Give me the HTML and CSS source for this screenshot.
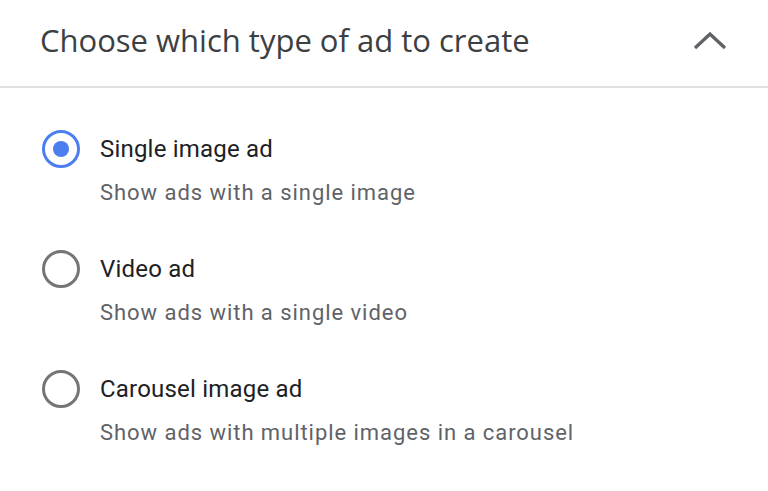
FILE: index.html
```html
<!DOCTYPE html>
<html>
<head>
<meta charset="utf-8">
<link rel="stylesheet" href="styles.css">
</head>
<body>
<div class="panel">
  <div class="header">
    <h1 class="title">Choose which type of ad to create</h1>
    <svg class="chevron" width="36" height="36" viewBox="0 0 36 36"><path d="M3 25 L18 11 L33 25" fill="none" stroke="#5f6368" stroke-width="3.4"/></svg>
  </div>
  <div class="options">
    <div class="option">
      <span class="radio checked"></span>
      <div class="texts">
        <div class="label">Single image ad</div>
        <div class="desc">Show ads with a single image</div>
      </div>
    </div>
    <div class="option">
      <span class="radio"></span>
      <div class="texts">
        <div class="label">Video ad</div>
        <div class="desc">Show ads with a single video</div>
      </div>
    </div>
    <div class="option">
      <span class="radio"></span>
      <div class="texts">
        <div class="label">Carousel image ad</div>
        <div class="desc">Show ads with multiple images in a carousel</div>
      </div>
    </div>
  </div>
</div>
</body>
</html>
```
FILE: styles.css
```css
html, body { margin: 0; padding: 0; background: #fff; }
body { font-family: Roboto, "Noto Sans", sans-serif; width: 768px; height: 491px; overflow: hidden; }
.panel { display: flex; flex-direction: column; }
.header {
  height: 86px;
  border-bottom: 2px solid #e0e0e0;
  display: flex;
  align-items: center;
  justify-content: space-between;
  padding: 0 40px 0 40px;
}
.title {
  margin: 0;
  font-family: "Open Sans", Roboto, sans-serif;
  font-weight: 400;
  font-size: 31px;
  color: #3c4043;
  letter-spacing: 0;
  margin-top: -6px;
}
.chevron { margin-top: -4px; }
.options { display: flex; flex-direction: column; padding: 40px 0 0 42px; gap: 40px; }
.option { display: flex; align-items: flex-start; gap: 20px; height: 80px; }
.radio {
  box-sizing: border-box;
  width: 38px; height: 38px;
  border: 3.5px solid #757575;
  border-radius: 50%;
  display: flex; align-items: center; justify-content: center;
  flex-shrink: 0;
  margin-top: 2px;
}
.radio.checked { border-color: #4c7ef0; }
.radio.checked::after {
  content: "";
  width: 16px; height: 16px; border-radius: 50%;
  background: #4c7ef0;
}
.texts { display: flex; flex-direction: column; }
.label { font-size: 24px; color: #202124; line-height: 30px; margin-top: 6px; letter-spacing: 0.2px; }
.desc { font-size: 22px; color: #5f6368; line-height: 28px; margin-top: 15px; letter-spacing: 0.95px; }
```
